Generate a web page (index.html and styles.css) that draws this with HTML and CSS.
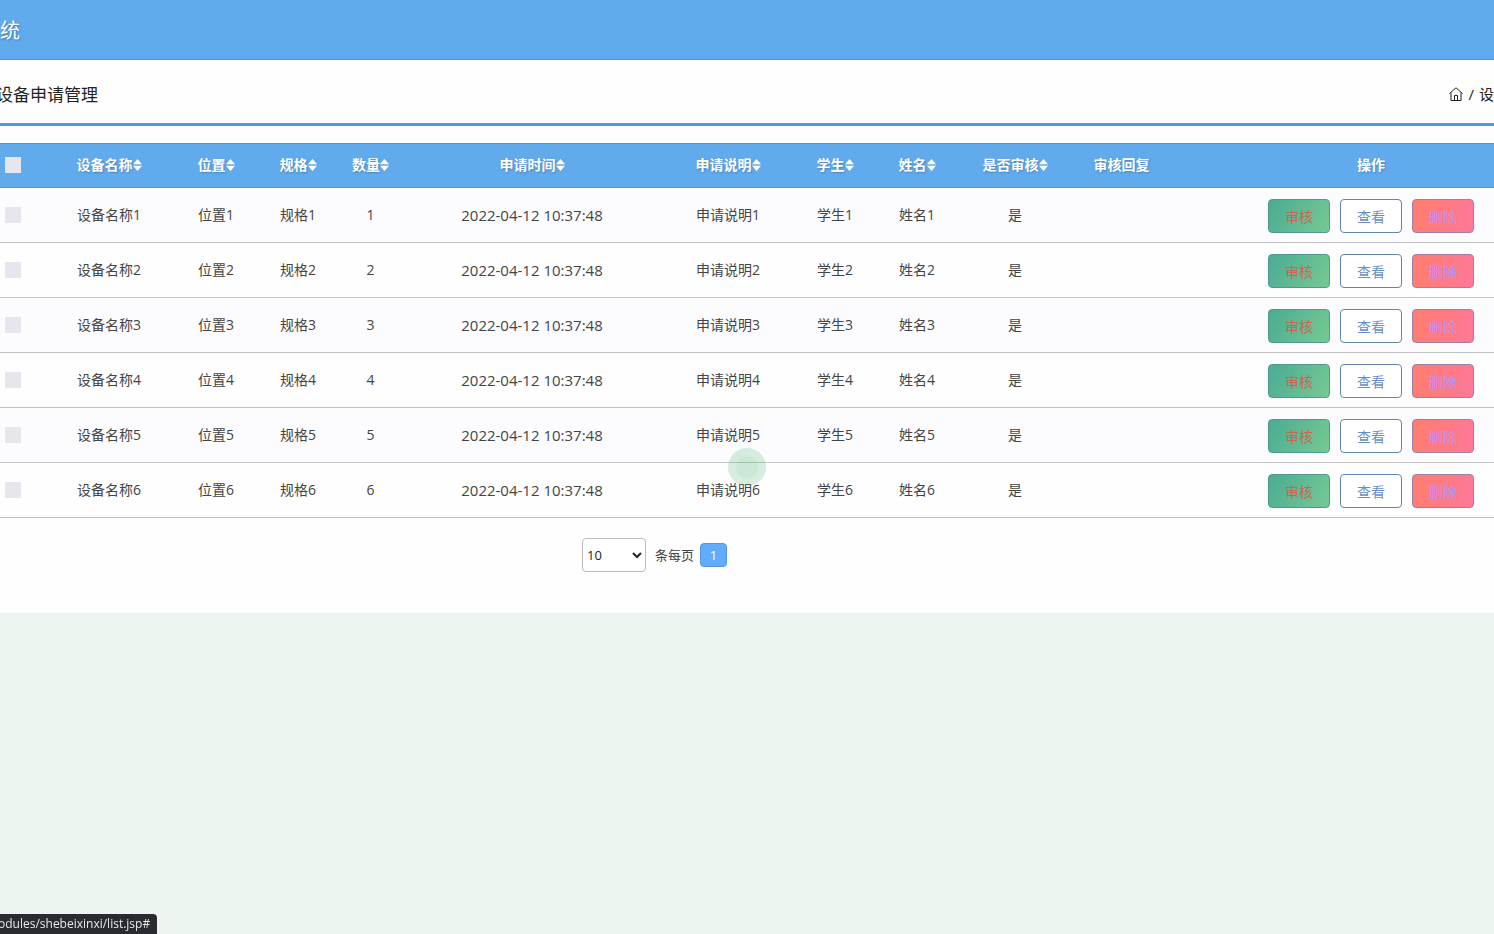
FILE: index.html
```
<!DOCTYPE html>
<html lang="zh-CN">
<head>
<meta charset="utf-8">
<title>设备申请管理</title>
<link rel="stylesheet" href="styles.css">
</head>
<body>
<svg class="defs" aria-hidden="true">
  <symbol id="sort" viewBox="0 0 9 12"><path d="M4.500 0 9 5.200H0zM4.500 12 0 6.800h9z"/></symbol>
</svg>
<header class="topbar"><span class="brand">统</span></header>
<main class="panel">
  <div class="heading">
    <h1 class="title">设备申请管理</h1>
    <nav class="crumbs">
      <a href="#" aria-label="首页"><svg class="home" viewBox="0 0 14 14"><path d="M.5 6.500 7 .8l6.500 5.700M2 5.500v8h10v-8M5.500 13.500v-5h3v5"/></svg></a>
      <span>/</span>
      <span>设</span>
    </nav>
  </div>
  <table class="grid">
    <colgroup>
      <col class="c-check"><col class="c-name"><col class="c-short"><col class="c-short"><col class="c-count"><col class="c-time"><col class="c-name"><col class="c-short"><col class="c-short"><col class="c-state"><col class="c-reply"><col class="c-ops">
    </colgroup>
    <thead><tr id="head"></tr></thead>
    <tbody id="rows"></tbody>
  </table>
  <div class="pager">
    <select class="size" id="size" aria-label="条每页"><option>10</option></select>
    <label class="size-label" for="size">条每页</label>
    <button class="page" type="button">1</button>
  </div>
</main>
<div class="spinner"></div>
<div class="status"><span class="status-text">odules/shebeixinxi/list.jsp#</span></div>
<script src="table.js"></script>
</body>
</html>
```
FILE: styles.css
```
* { box-sizing: border-box; }
body {
  margin: 0;
  min-height: 100vh;
  overflow-x: hidden;
  background: #ecf5f0;
  color: #444;
  font: 14px/20px "Open Sans", "Noto Sans CJK SC", sans-serif;
}
button, select, input { font: inherit; margin: 0; }
.defs { position: absolute; width: 0; height: 0; }
.topbar {
  display: flex;
  align-items: center;
  height: 60px;
  padding-top: 2px;
  background: #61aaec;
  border-bottom: 1px solid #5590c8;
}
.brand { color: #fff; font-size: 20px; line-height: 28px; text-shadow: 1px 1px 2px #3f78ad; }
.panel { background: #fefefe; padding-bottom: 41px; }
.heading {
  display: flex;
  justify-content: space-between;
  align-items: center;
  height: 66px;
  margin-bottom: 17px;
  overflow: hidden;
  border-bottom: 3px solid #5b97d0;
}
.title { margin: 0 0 0 -4px; padding-top: 6px; font-size: 17px; line-height: 24px; font-weight: 400; color: #222; }
.crumbs { display: flex; align-items: center; gap: 5px; padding-top: 4px; color: #222; font-size: 15px; }
.crumbs a { display: flex; color: inherit; }
.home { width: 14px; height: 14px; fill: none; stroke: currentColor; stroke-width: 1; }
.grid { width: 100%; table-layout: fixed; border-collapse: separate; border-spacing: 0; }
.c-check { width: 43px; }
.c-name { width: 132px; }
.c-short { width: 82px; }
.c-count { width: 63px; }
.c-time { width: 260px; }
.c-state { width: 114px; }
.c-reply { width: 99px; }
.c-ops { width: 323px; }
.grid th, .grid td { padding: 0; text-align: center; white-space: nowrap; }
.grid th {
  height: 45px;
  padding-bottom: 2px;
  background: #61aaec;
  border-top: 1px solid #5992c7;
  border-bottom: 1px solid #5992c7;
  color: #fff;
  font-weight: 700;
  text-shadow: 1px 1px 2px #4a84bb;
}
.grid td { height: 55px; border-bottom: 1px solid #c3c3c6; }
.grid tbody tr:nth-child(odd) { background: #fcfcfe; }
.grid .check { padding-left: 5px; text-align: left; }
.grid .ops { padding-left: 77px; }
.grid .time { font-size: 15px; padding-bottom: 1px; }
.box { display: block; appearance: none; width: 16px; height: 16px; background: #e6e6ec; }
.sort { width: 9px; height: 12px; fill: #fff; vertical-align: -1px; }
.actions { display: flex; justify-content: center; gap: 10px; padding-top: 2px; }
.btn {
  width: 62px;
  height: 34px;
  padding: 2px 0 0;
  border: 1px solid #6185ad;
  border-radius: 4px;
  background: #fff;
  color: #6690c4;
}
.btn.audit { background: linear-gradient(120deg, #4aac93, #76c993); border-color: #4f9a90; color: #c9674f; }
.btn.remove { background: linear-gradient(100deg, #ff7d6e, #ff7898); border-color: #a07ea8; color: #b992ee; }
.pager { display: flex; justify-content: center; align-items: center; padding: 20px 185px 0 0; font-size: 13px; }
.size { width: 64px; height: 34px; padding: 0; border: 1px solid #bbb; border-radius: 4px; background: #fff; color: #222; }
.size-label { margin: 0 6px 0 9px; }
.page { width: 27px; height: 24px; padding: 0; border: 1px solid #5996d8; border-radius: 4px; background: #61acfb; color: #fff; }
.spinner {
  position: fixed;
  left: 50%;
  top: 50%;
  width: 38px;
  height: 38px;
  transform: translate(-50%, -50%);
  border-radius: 50%;
  background: radial-gradient(circle, rgba(105, 190, 140, .34) 0 10px, rgba(105, 190, 140, .27) 12px);
}
.status {
  position: fixed;
  left: 0;
  bottom: 0;
  overflow: hidden;
  padding-right: 7px;
  border-top-right-radius: 4px;
  background: #292b31;
  color: #e6e8ec;
  font-size: 12px;
}
.status-text { display: block; margin-left: -2px; }
```
FILE: table.js
```
const columns = ['设备名称', '位置', '规格', '数量', '申请时间', '申请说明', '学生', '姓名', '是否审核'];
const sortIcon = '<svg class="sort" aria-hidden="true"><use href="#sort"/></svg>';
document.getElementById('head').innerHTML =
  '<th class="check"><input class="box" type="checkbox" aria-label="全选"></th>' +
  columns.map(c => `<th>${c}${sortIcon}</th>`).join('') +
  '<th>审核回复</th><th class="ops">操作</th>';
document.getElementById('rows').innerHTML = [1, 2, 3, 4, 5, 6].map(n => `
  <tr>
    <td class="check"><input class="box" type="checkbox" aria-label="选择${n}"></td>
    <td>设备名称${n}</td><td>位置${n}</td><td>规格${n}</td><td>${n}</td>
    <td class="time">2022-04-12 10:37:48</td>
    <td>申请说明${n}</td><td>学生${n}</td><td>姓名${n}</td><td>是</td><td></td>
    <td class="ops"><div class="actions">
      <button class="btn audit" type="button">审核</button>
      <button class="btn" type="button">查看</button>
      <button class="btn remove" type="button">删除</button>
    </div></td>
  </tr>`).join('');
```
